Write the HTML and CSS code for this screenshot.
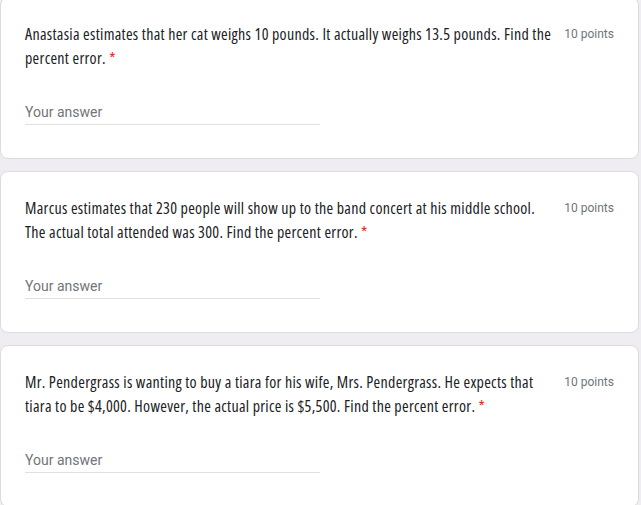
FILE: index.html
```html
<!DOCTYPE html>
<html>
<head>
<meta charset="utf-8">
<title>Quiz</title>
<link rel="stylesheet" href="styles.css">
</head>
<body>
<div class="list">
  <div class="card">
    <div class="head">
      <div class="title">Anastasia estimates that her cat weighs 10 pounds. It actually weighs 13.5 pounds. Find the<br>percent error. <span class="req">*</span></div>
      <div class="points">10 points</div>
    </div>
    <div class="answer"><span class="ph">Your answer</span></div>
  </div>
  <div class="card">
    <div class="head">
      <div class="title">Marcus estimates that 230 people will show up to the band concert at his middle school.<br>The actual total attended was 300. Find the percent error. <span class="req">*</span></div>
      <div class="points">10 points</div>
    </div>
    <div class="answer"><span class="ph">Your answer</span></div>
  </div>
  <div class="card">
    <div class="head">
      <div class="title">Mr. Pendergrass is wanting to buy a tiara for his wife, Mrs. Pendergrass. He expects that<br>tiara to be $4,000. However, the actual price is $5,500. Find the percent error. <span class="req">*</span></div>
      <div class="points">10 points</div>
    </div>
    <div class="answer"><span class="ph">Your answer</span></div>
  </div>
</div>
</body>
</html>
```
FILE: styles.css
```css
html, body {
  margin: 0;
  padding: 0;
  background: #efedf2;
}
body {
  width: 641px;
  height: 505px;
  overflow: hidden;
}
.list {
  display: flex;
  flex-direction: column;
  gap: 12px;
  margin-top: -3px;
  margin-right: 2px;
}
.card {
  background: #ffffff;
  border: 1px solid #dadce0;
  border-radius: 8px;
  padding: 24px;
}
.head {
  display: flex;
  align-items: flex-start;
}
.title {
  flex: 1;
  font-family: "Open Sans", sans-serif;
  font-stretch: 80%;
  font-size: 16px;
  line-height: 24px;
  color: #202124;
  letter-spacing: 0.3px;
}
.req {
  color: #d93025;
}
.points {
  flex-shrink: 0;
  margin-left: 12px;
  font-family: Roboto, sans-serif;
  font-size: 12px;
  line-height: 24px;
  color: #70757a;
}
.answer {
  width: 295px;
  height: 24px;
  margin-top: 30px;
  margin-bottom: 9px;
  border-bottom: 1px solid #e0e0e0;
  display: flex;
  align-items: center;
}
.ph {
  font-family: Roboto, sans-serif;
  font-size: 14px;
  line-height: 24px;
  color: #70757a;
}
```
